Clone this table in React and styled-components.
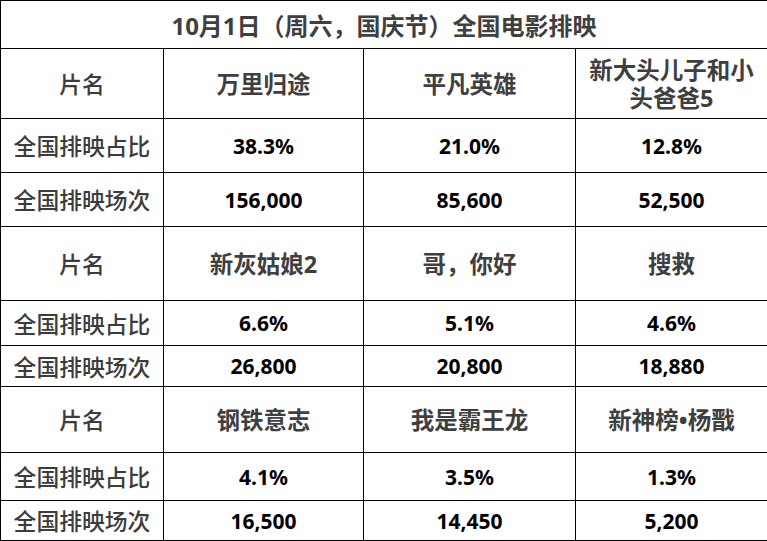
import React from "react";
import styled, { createGlobalStyle } from "styled-components";

const Global = createGlobalStyle`
  html, body { margin: 0; padding: 0; background: #fff; }
  body { font-family: "Noto Sans", "Noto Sans CJK SC", sans-serif; }
`;

const Table = styled.table`
  width: 767px;
  border-collapse: collapse;
  table-layout: fixed;
  background: #fff;
`;

const Row = styled.tr`
  height: ${(p) => p.$h}px;
`;

const Cell = styled.td`
  border: 1px solid #000;
  padding: 0 6px;
  text-align: center;
  vertical-align: middle;
`;

const TitleCell = styled(Cell)`
  font-family: "Noto Sans", "Noto Sans CJK SC", sans-serif;
  font-size: 24px;
  font-weight: 700;
  color: #3f3f3f;
`;

const LabelCell = styled(Cell)`
  font-family: "Noto Sans CJK SC", sans-serif;
  font-size: 22.8px;
  font-weight: 500;
  color: #3c3c3c;
  padding: 0;
`;

const NameCell = styled(Cell)`
  font-family: "Noto Sans", "Noto Sans CJK SC", sans-serif;
  font-size: 23.5px;
  font-weight: 700;
  color: #3f3f3f;
  line-height: 28px;
`;

const ValueCell = styled(Cell)`
  font-family: "Noto Sans", "Noto Sans CJK SC", sans-serif;
  font-size: 21px;
  font-weight: 700;
  color: #000;
`;

const groups = [
  {
    heights: [70, 54, 54],
    names: ["万里归途", "平凡英雄", "新大头儿子和小头爸爸5"],
    share: ["38.3%", "21.0%", "12.8%"],
    shows: ["156,000", "85,600", "52,500"],
  },
  {
    heights: [74, 45, 41],
    names: ["新灰姑娘2", "哥，你好", "搜救"],
    share: ["6.6%", "5.1%", "4.6%"],
    shows: ["26,800", "20,800", "18,880"],
  },
  {
    heights: [66, 48, 40],
    names: ["钢铁意志", "我是霸王龙", "新神榜•杨戬"],
    share: ["4.1%", "3.5%", "1.3%"],
    shows: ["16,500", "14,450", "5,200"],
  },
];

export default function App() {
  return (
    <>
      <Global />
      <Table>
        <colgroup>
          <col style={{ width: 163 }} />
          <col style={{ width: 200 }} />
          <col style={{ width: 212 }} />
          <col style={{ width: 192 }} />
        </colgroup>
        <tbody>
          <Row $h={48}>
            <TitleCell colSpan={4}>10月1日（周六，国庆节）全国电影排映</TitleCell>
          </Row>
          {groups.map((g, i) => (
            <React.Fragment key={i}>
              <Row $h={g.heights[0]}>
                <LabelCell>片名</LabelCell>
                {g.names.map((n) => (
                  <NameCell key={n}>{n}</NameCell>
                ))}
              </Row>
              <Row $h={g.heights[1]}>
                <LabelCell>全国排映占比</LabelCell>
                {g.share.map((v, j) => (
                  <ValueCell key={j}>{v}</ValueCell>
                ))}
              </Row>
              <Row $h={g.heights[2]}>
                <LabelCell>全国排映场次</LabelCell>
                {g.shows.map((v, j) => (
                  <ValueCell key={j}>{v}</ValueCell>
                ))}
              </Row>
            </React.Fragment>
          ))}
        </tbody>
      </Table>
    </>
  );
}
